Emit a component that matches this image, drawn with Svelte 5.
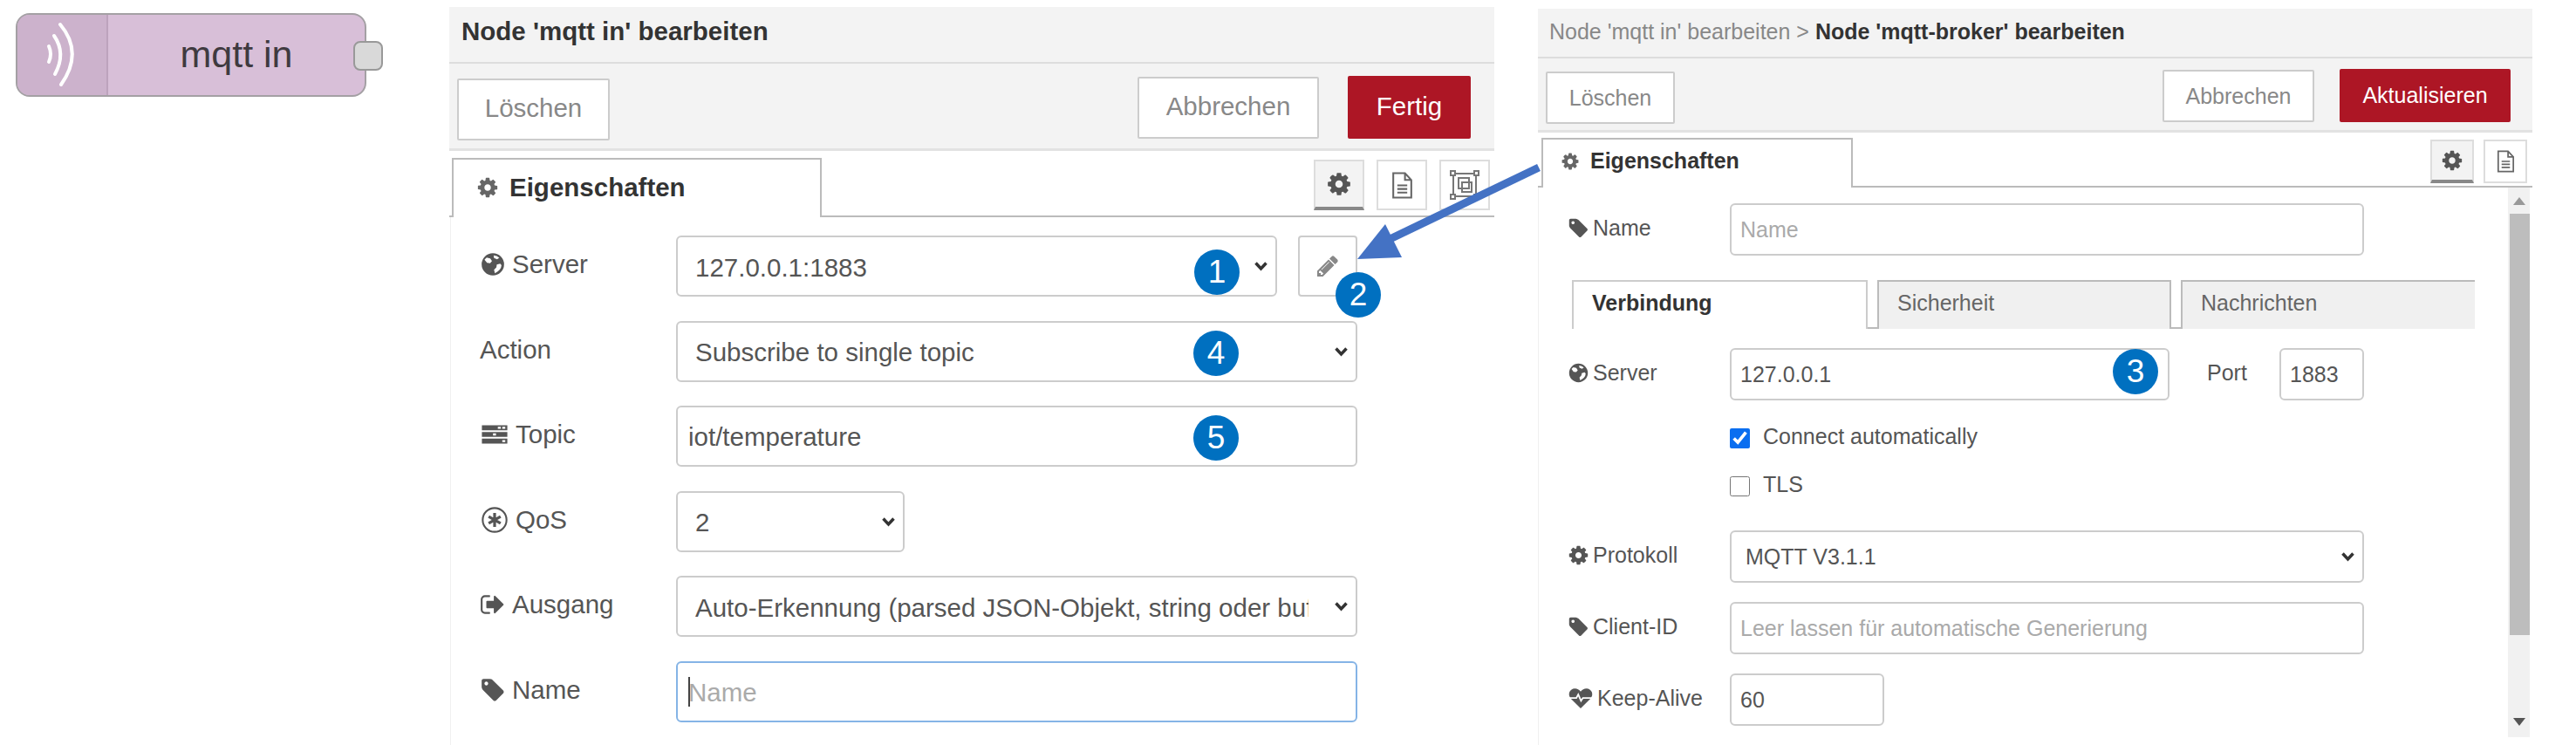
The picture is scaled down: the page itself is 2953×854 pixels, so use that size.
<script>
  // FontAwesome-like glyphs, 1792 box
  const glyphs = {
    cog: 'M1152 896q0-106-75-181t-181-75-181 75-75 181 75 181 181 75 181-75 75-181zm512-109v222q0 12-8 23t-20 13l-185 28q-19 54-39 91 35 50 107 138 10 12 10 25t-9 23q-27 37-99 108t-94 71q-12 0-26-9l-138-108q-44 23-91 38-16 136-29 186-7 28-36 28h-222q-14 0-24.500-8.500t-11.500-21.500l-28-184q-49-16-90-37l-141 107q-10 9-25 9-14 0-25-11-126-114-165-168-7-10-7-23 0-12 8-23 15-21 51-66.500t54-70.500q-27-50-41-99l-183-27q-13-2-21-12.500t-8-23.500v-222q0-12 8-23t19-13l186-28q14-46 39-92-40-57-107-138-10-12-10-24 0-10 9-23 26-36 98.500-107.500t94.500-71.500q13 0 26 10l138 107q44-23 91-38 16-136 29-186 7-28 36-28h222q14 0 24.500 8.500t11.500 21.500l28 184q49 16 90 37l142-107q9-9 24-9 13 0 25 10 129 119 165 170 7 8 7 22 0 12-8 23-15 21-51 66.500t-54 70.500q26 50 41 98l183 28q13 2 21 12.500t8 23.500z',
    tag: 'M576 448q0-53-37.500-90.500t-90.500-37.500-90.500 37.500-37.500 90.500 37.500 90.500 90.500 37.500 90.500-37.500 37.500-90.500zm1067 576q0 53-37 90l-491 492q-39 37-91 37-53 0-90-37l-715-716q-38-37-64.500-101t-26.500-117v-416q0-52 38-90t90-38h416q53 0 117 26.500t102 64.500l715 714q37 39 37 91z',
    pencil: 'M491 1536l91-91-235-235-91 91v107h128v128h107zm523-928q0-22-22-22-10 0-17 7l-542 542q-7 7-7 17 0 22 22 22 10 0 17-7l542-542q7-7 7-17zm-54-192l416 416-832 832h-416v-416zm683 96q0 53-37 90l-166 166-416-416 166-165q36-38 90-38 53 0 91 38l235 234q37 39 37 91z',
    exit: 'M704 1440q0 4 1 20t.5 26.500-3 23.500-10 19.500-20.500 6.500h-320q-119 0-203.500-84.500t-84.500-203.500v-704q0-119 84.500-203.500t203.500-84.500h320q13 0 22.500 9.500t9.500 22.500q0 4 1 20t.5 26.500-3 23.500-10 19.500-20.500 6.500h-320q-66 0-113 47t-47 113v704q0 66 47 113t113 47h312l11.500 1 11.500 3 8 5.500 7 9 2 13.500zm928-544q0 26-19 45l-544 544q-19 19-45 19t-45-19-19-45v-288h-448q-26 0-45-19t-19-45v-384q0-26 19-45t45-19h448v-288q0-26 19-45t45-19 45 19l544 544q19 19 19 45z',
    globe: 'M896 128a768 768 0 1 0 0 1536 768 768 0 0 0 0-1536zm-420 300l240 60 120 190-130 150-210-30-170-220q60-90 150-150zm560 1080l-60-240 160-170 30-190 230-60 90 110q-20 340-450 550zm150-960l-210-90-30-170q230 20 390 160z',
    heart: 'M896 1620 L230 950 Q40 740 130 500 Q230 260 500 250 Q740 250 896 470 Q1050 250 1290 250 Q1560 260 1660 500 Q1750 740 1560 950 Z'
  }

  const mainRows = [
    { label: 'Action', kind: 'select', value: 'Subscribe to single topic' },
    { label: 'Topic', icon: 'tasks', size: 34, kind: 'input', value: 'iot/temperature' },
    { label: 'QoS', icon: 'qos', size: 34, kind: 'select', value: '2', short: true },
    { label: 'Ausgang', icon: 'exit', size: 30, kind: 'select', value: 'Auto-Erkennung (parsed JSON-Objekt, string oder buffer)' },
    { label: 'Name', icon: 'tag', size: 30, kind: 'input', placeholder: 'Name', focused: true }
  ]
</script>

{#snippet icon(name, size = 24)}
  <svg class="ico" width={size} height={size} viewBox="0 0 1792 1792" aria-hidden="true">
    {#if name === 'tasks'}
      <path fill="currentColor" d="M128 340h1536v300H128zM128 746h1536v300H128zM128 1152h1536v300H128z" />
      <path fill="#fff" d="M1090 430h180v120h-180zM1360 430h180v120h-180zM800 836h180v120H800zM1360 1242h180v120h-180z" />
    {:else if name === 'qos'}
      <circle cx="896" cy="896" r="720" fill="none" stroke="currentColor" stroke-width="110" />
      <path fill="none" stroke="currentColor" stroke-width="170" d="M896 480v832M536 688l720 416M536 1104l720-416" />
    {:else if name === 'heartbeat'}
      <path fill="currentColor" d={glyphs.heart} />
      <path fill="none" stroke="#fff" stroke-width="110" d="M120 900h480l130-240 190 440 130-200h640" />
    {:else}
      <path fill="currentColor" d={glyphs[name]} />
    {/if}
  </svg>
{/snippet}

{#snippet fileIcon(w, h)}
  <svg width={w} height={h} viewBox="0 0 24 30" fill="none" stroke="#666" stroke-width="2" aria-hidden="true">
    <path d="M2 1.500h13l7 7.500v19.500H2zM15 1.500V9h7M6.500 15h11M6.500 19h11M6.500 23h11" />
  </svg>
{/snippet}

{#snippet selectBox(value, extra = '')}
  <div class="select-wrap {extra}">
    <select>
      <option>{value}</option>
    </select>
    <svg class="chevron" viewBox="0 0 16 12" aria-hidden="true">
      <path d="M2 2.500l6 6.500 6-6.500" fill="none" stroke="#333" stroke-width="3.500" />
    </svg>
  </div>
{/snippet}

<div class="page">
  <div class="node-col">
    <div class="node">
      <div class="node-icon">
        <svg width="44" height="76" viewBox="0 0 44 76" fill="none" stroke="#fff" stroke-width="4" stroke-linecap="round" aria-hidden="true">
          <path d="M9 28q4 9 0 18" />
          <path d="M15 16q14 20 1 44" />
          <path d="M22 3q27 32 1 69" />
        </svg>
      </div>
      <div class="node-label">mqtt in</div>
      <div class="node-port"></div>
    </div>
  </div>

  <section class="panel panel-main">
    <header class="title">Node 'mqtt in' bearbeiten</header>
    <div class="toolbar">
      <button class="btn del-main">Löschen</button>
      <div class="spacer"></div>
      <button class="btn cancel-main">Abbrechen</button>
      <button class="btn primary done-main">Fertig</button>
    </div>
    <div class="tabbar">
      <div class="tab">{@render icon('cog', 26)}<span>Eigenschaften</span></div>
      <div class="tab-tools">
        <div class="tool active">{@render icon('cog', 30)}</div>
        <div class="tool">{@render fileIcon(25, 31)}</div>
        <div class="tool">
          <svg width="36" height="36" viewBox="0 0 36 36" fill="none" stroke="#777" stroke-width="2" aria-hidden="true">
            <path d="M5 5h26v26H5zM11 10h12v12H11zM15 15h11v11H15z" />
            <path fill="#fff" d="M2 2h5v5H2zM29 2h5v5h-5zM2 29h5v5H2zM29 29h5v5h-5z" />
          </svg>
        </div>
      </div>
    </div>
    <div class="form form-main">
      <div class="row">
        <label>{@render icon('globe', 30)}Server</label>
        {@render selectBox('127.0.0.1:1883', 'server-select')}
        <button class="edit-btn">{@render icon('pencil', 28)}</button>
        <span class="badge" style="left: 852px; top: 16px">1</span>
        <span class="badge" style="left: 1014px; top: 42px">2</span>
      </div>
      {#each mainRows as r}
        <div class="row">
          <label>{#if r.icon}{@render icon(r.icon, r.size)}{/if}{r.label}</label>
          {#if r.kind === 'select'}
            {@render selectBox(r.value, r.short ? 'short' : '')}
          {:else}
            <input class="field" class:focused={r.focused} value={r.value ?? ''} placeholder={r.placeholder ?? ''} />
          {/if}
          {#if r.label === 'Action'}<span class="badge" style="left: 851px; top: 11px">4</span>{/if}
          {#if r.label === 'Topic'}<span class="badge" style="left: 851px; top: 11px">5</span>{/if}
          {#if r.focused}<span class="caret"></span>{/if}
        </div>
      {/each}
    </div>
  </section>

  <section class="panel panel-broker">
    <header class="title crumb"><span class="crumb-prev">Node 'mqtt in' bearbeiten &gt;</span> Node 'mqtt-broker' bearbeiten</header>
    <div class="toolbar">
      <button class="btn del-broker">Löschen</button>
      <div class="spacer"></div>
      <button class="btn cancel-broker">Abbrechen</button>
      <button class="btn primary done-broker">Aktualisieren</button>
    </div>
    <div class="tabbar">
      <div class="tab">{@render icon('cog', 22)}<span>Eigenschaften</span></div>
      <div class="tab-tools">
        <div class="tool active">{@render icon('cog', 26)}</div>
        <div class="tool">{@render fileIcon(21, 26)}</div>
      </div>
    </div>
    <div class="broker-body">
      <div class="form form-broker">
        <div class="row">
          <label>{@render icon('tag', 25)}Name</label>
          <input class="field" placeholder="Name" />
        </div>
        <div class="subtabs">
          <div class="subtab current">Verbindung</div>
          <div class="subtab">Sicherheit</div>
          <div class="subtab">Nachrichten</div>
        </div>
        <div class="row server-row">
          <label>{@render icon('globe', 25)}Server</label>
          <input class="field host" value="127.0.0.1" />
          <span class="port-label">Port</span>
          <input class="field port" value="1883" />
          <span class="badge" style="left: 658px; top: 1px">3</span>
        </div>
        <label class="check first"><input type="checkbox" checked /><span>Connect automatically</span></label>
        <label class="check"><input type="checkbox" /><span>TLS</span></label>
        <div class="row proto-row">
          <label>{@render icon('cog', 25)}Protokoll</label>
          {@render selectBox('MQTT V3.1.1')}
        </div>
        <div class="row">
          <label>{@render icon('tag', 25)}Client-ID</label>
          <input class="field" placeholder="Leer lassen für automatische Generierung" />
        </div>
        <div class="row">
          <label>{@render icon('heartbeat', 30)}Keep-Alive</label>
          <input class="field keep" value="60" />
        </div>
      </div>
      <div class="scrollbar">
        <span class="arrow-up"></span>
        <div class="thumb"></div>
        <span class="arrow-down"></span>
      </div>
    </div>
  </section>

  <svg class="link-arrow" width="220" height="110" viewBox="0 0 220 110" aria-hidden="true">
    <path d="M208 5L27 92" stroke="#4472c4" stroke-width="9" fill="none" />
    <path d="M0 110L32 70L51 108Z" fill="#4472c4" />
  </svg>
</div>

<style>
  :global(body) {
    margin: 0;
    background: #fff;
  }

  .page {
    position: relative;
    display: grid;
    grid-template-columns: 515px 1198px 50px 1140px;
    width: 2953px;
    height: 854px;
    overflow: hidden;
    font-family: "Liberation Sans", Arial, sans-serif;
    color: #555;
  }

  /* flow node */
  .node-col {
    padding: 15px 0 0 18px;
  }

  .node {
    position: relative;
    display: flex;
    width: 402px;
    height: 96px;
    box-sizing: border-box;
    background: #d8bfd8;
    border: 2px solid #a4a0a4;
    border-radius: 16px;
  }

  .node-icon {
    display: flex;
    align-items: center;
    justify-content: center;
    width: 102px;
    background: #ccb2cc;
    border-right: 2px solid #bda3bd;
    border-radius: 14px 0 0 14px;
  }

  .node-icon svg {
    margin-left: -4px;
  }

  .node-label {
    flex: 1;
    font-size: 43px;
    line-height: 90px;
    text-align: center;
    color: #3f3a40;
  }

  .node-port {
    position: absolute;
    right: -21px;
    top: 30px;
    width: 30px;
    height: 30px;
    background: #d9d9d9;
    border: 2px solid #999;
    border-radius: 8px;
  }

  /* edit panels */
  .panel {
    grid-row: 1;
    display: flex;
    flex-direction: column;
  }

  .panel-main {
    grid-column: 2;
    padding-top: 8px;
    font-size: 29.5px;
  }

  .panel-broker {
    grid-column: 4;
    padding-top: 10px;
    width: 1140px;
    font-size: 25px;
  }

  .title {
    box-sizing: border-box;
    padding-left: 14px;
    background: #f3f3f3;
    border-bottom: 2px solid #ddd;
    font-weight: 700;
    color: #333;
  }

  .panel-main .title {
    height: 65px;
    line-height: 56px;
  }

  .panel-broker .title {
    height: 57px;
    padding-left: 13px;
    line-height: 52px;
  }

  .crumb-prev {
    font-weight: 400;
    color: #888;
  }

  .toolbar {
    display: flex;
    align-items: flex-start;
    box-sizing: border-box;
    background: #f3f3f3;
    border-bottom: 3px solid #e2e2e2;
  }

  .panel-main .toolbar {
    height: 100px;
  }

  .panel-broker .toolbar {
    height: 85px;
  }

  .spacer {
    flex: 1;
  }

  .btn {
    box-sizing: border-box;
    padding: 0 0 3px;
    background: #fff;
    border: 2px solid #ccc;
    border-radius: 2px;
    font: inherit;
    color: #888;
  }

  .panel-broker .btn {
    padding: 0;
  }

  .btn.primary {
    background: #ad1625;
    border-color: #ad1625;
    color: #fff;
  }

  .del-main {
    width: 175px;
    height: 71px;
    margin: 17px 0 0 9px;
  }

  .cancel-main {
    width: 208px;
    height: 71px;
    margin-top: 15px;
  }

  .done-main {
    width: 141px;
    height: 72px;
    margin: 14px 27px 0 33px;
  }

  .del-broker {
    width: 148px;
    height: 60px;
    margin: 15px 0 0 9px;
  }

  .cancel-broker {
    width: 174px;
    height: 60px;
    margin-top: 13px;
  }

  .done-broker {
    width: 196px;
    height: 61px;
    margin: 12px 25px 0 29px;
  }

  .tabbar {
    display: flex;
    justify-content: space-between;
    align-items: flex-start;
    box-sizing: border-box;
    border-bottom: 2px solid #bbb;
  }

  .panel-main .tabbar {
    height: 76px;
  }

  .panel-broker .tabbar {
    height: 63px;
  }

  .tab {
    display: flex;
    align-items: center;
    gap: 12px;
    box-sizing: border-box;
    background: #fff;
    border: 2px solid #bbb;
    border-bottom: 0;
    font-weight: 700;
    color: #333;
  }

  .tab .ico {
    color: #666;
  }

  .panel-main .tab {
    width: 424px;
    height: 68px;
    margin: 8px 0 -2px 3px;
    padding: 0 0 2px 26px;
  }

  .panel-broker .tab {
    width: 357px;
    height: 57px;
    margin: 6px 0 -2px 4px;
    padding: 0 0 6px 20px;
  }

  .tab-tools {
    display: flex;
    gap: 14px;
  }

  .panel-main .tab-tools {
    margin: 10px 5px 0 0;
  }

  .panel-broker .tab-tools {
    gap: 11px;
    margin: 8px 6px 0 0;
  }

  .tool {
    display: flex;
    align-items: center;
    justify-content: center;
    box-sizing: border-box;
    border: 2px solid #ddd;
    color: #555;
  }

  .panel-main .tool {
    width: 58px;
    height: 58px;
  }

  .panel-broker .tool {
    width: 50px;
    height: 50px;
  }

  .tool.active {
    background: #f3f3f3;
    border-bottom: 4px solid #888;
  }

  .form {
    display: flex;
    flex-direction: column;
  }

  .form-main {
    gap: 27.5px;
    height: 604px;
    margin-left: 1px;
    padding-top: 21px;
    padding-right: 157px;
    border-left: 1px solid #f0f0f0;
  }

  .row {
    position: relative;
    display: flex;
    align-items: center;
  }

  .row > label {
    display: flex;
    align-items: center;
    flex: none;
    color: #555;
  }

  .form-main .row {
    height: 70px;
    padding-left: 33px;
  }

  .form-main .row > label {
    gap: 7px;
    width: 225px;
    margin-top: -4px;
  }

  .field,
  select {
    box-sizing: border-box;
    height: 100%;
    background: #fff;
    border: 2px solid #ccc;
    border-radius: 6px;
    font: inherit;
    color: #555;
    outline: none;
  }

  .field {
    flex: 1;
    min-width: 0;
    padding: 2px 12px 0;
  }

  .field::placeholder {
    color: #aaa;
    opacity: 1;
  }

  .field.focused {
    border-color: #85b4e6;
  }

  .caret {
    position: absolute;
    left: 272px;
    top: 18px;
    width: 2px;
    height: 34px;
    background: #444;
  }

  .select-wrap {
    position: relative;
    flex: 1;
    min-width: 0;
    height: 100%;
  }

  .select-wrap select {
    width: 100%;
    padding: 2px 54px 0 20px;
    appearance: none;
  }

  .select-wrap.short {
    flex: none;
    width: 262px;
  }

  .select-wrap.server-select {
    flex: none;
    width: 689px;
  }

  .chevron {
    position: absolute;
    right: 10px;
    top: 50%;
    width: 17px;
    height: 12px;
    margin-top: -6px;
    pointer-events: none;
  }

  .edit-btn {
    display: flex;
    align-items: center;
    justify-content: center;
    box-sizing: border-box;
    width: 69px;
    height: 100%;
    margin-left: 24px;
    padding: 0;
    background: #fff;
    border: 2px solid #ccc;
    border-radius: 4px;
    color: #888;
  }

  .badge {
    position: absolute;
    display: flex;
    align-items: center;
    justify-content: center;
    width: 52px;
    height: 52px;
    background: #0070c0;
    border-radius: 50%;
    font-size: 37px;
    color: #fff;
  }

  /* broker form */
  .broker-body {
    display: flex;
  }

  .form-broker {
    flex: 1;
    min-width: 0;
    height: 635px;
    padding-top: 18px;
    padding-right: 165px;
    border-left: 1px solid #f0f0f0;
  }

  .form-broker .row {
    height: 60px;
    padding-left: 33px;
  }

  .form-broker .row > label {
    gap: 4px;
    width: 186px;
    margin-top: -4px;
  }

  .form-broker .select-wrap select {
    padding: 0 40px 0 16px;
  }

  .form-broker .field {
    padding: 0 10px;
  }

  .subtabs {
    display: flex;
    gap: 11px;
    width: 1035px;
    height: 56px;
    margin: 28px -165px 22px 38px;
    box-sizing: border-box;
    border-bottom: 2px solid #bbb;
  }

  .subtab {
    box-sizing: border-box;
    width: 337px;
    height: 56px;
    padding: 0 0 2px 21px;
    background: #f0f0f0;
    border: 2px solid #bbb;
    border-bottom: 0;
    line-height: 48px;
    color: #666;
  }

  .subtab.current {
    width: 339px;
    background: #fff;
    font-weight: 700;
    color: #333;
    border-color: #ccc;
  }

  .subtab:last-child {
    border-right: 0;
  }

  .field.host {
    flex: none;
    width: 504px;
  }

  .port-label {
    width: 85px;
    margin-left: 43px;
    margin-top: -4px;
  }

  .field.port {
    flex: none;
    width: 97px;
  }

  .field.keep {
    flex: none;
    width: 177px;
  }

  .check {
    display: flex;
    align-items: center;
    gap: 15px;
    height: 24px;
    margin-left: 219px;
    margin-top: 31px;
    color: #555;
  }

  .check span {
    margin-top: -4px;
  }

  .check input {
    width: 23px;
    height: 23px;
    margin: 0;
    accent-color: #0a6ef0;
  }

  .proto-row {
    margin-top: 39px;
    margin-bottom: 22px;
  }

  .form-broker .proto-row + .row {
    margin-bottom: 22px;
  }

  .scrollbar {
    position: relative;
    flex: none;
    width: 25px;
    height: 630px;
    margin-right: 3px;
    background: #f1f1f1;
  }

  .thumb {
    position: absolute;
    left: 2px;
    right: 0;
    top: 30px;
    height: 483px;
    background: #bdbdbd;
  }

  .arrow-up,
  .arrow-down {
    position: absolute;
    left: 6px;
    border-left: 7px solid transparent;
    border-right: 7px solid transparent;
  }

  .arrow-up {
    top: 11px;
    border-bottom: 9px solid #999;
  }

  .arrow-down {
    bottom: 13px;
    border-top: 9px solid #555;
  }

  .link-arrow {
    position: absolute;
    left: 1556px;
    top: 187px;
  }
</style>
